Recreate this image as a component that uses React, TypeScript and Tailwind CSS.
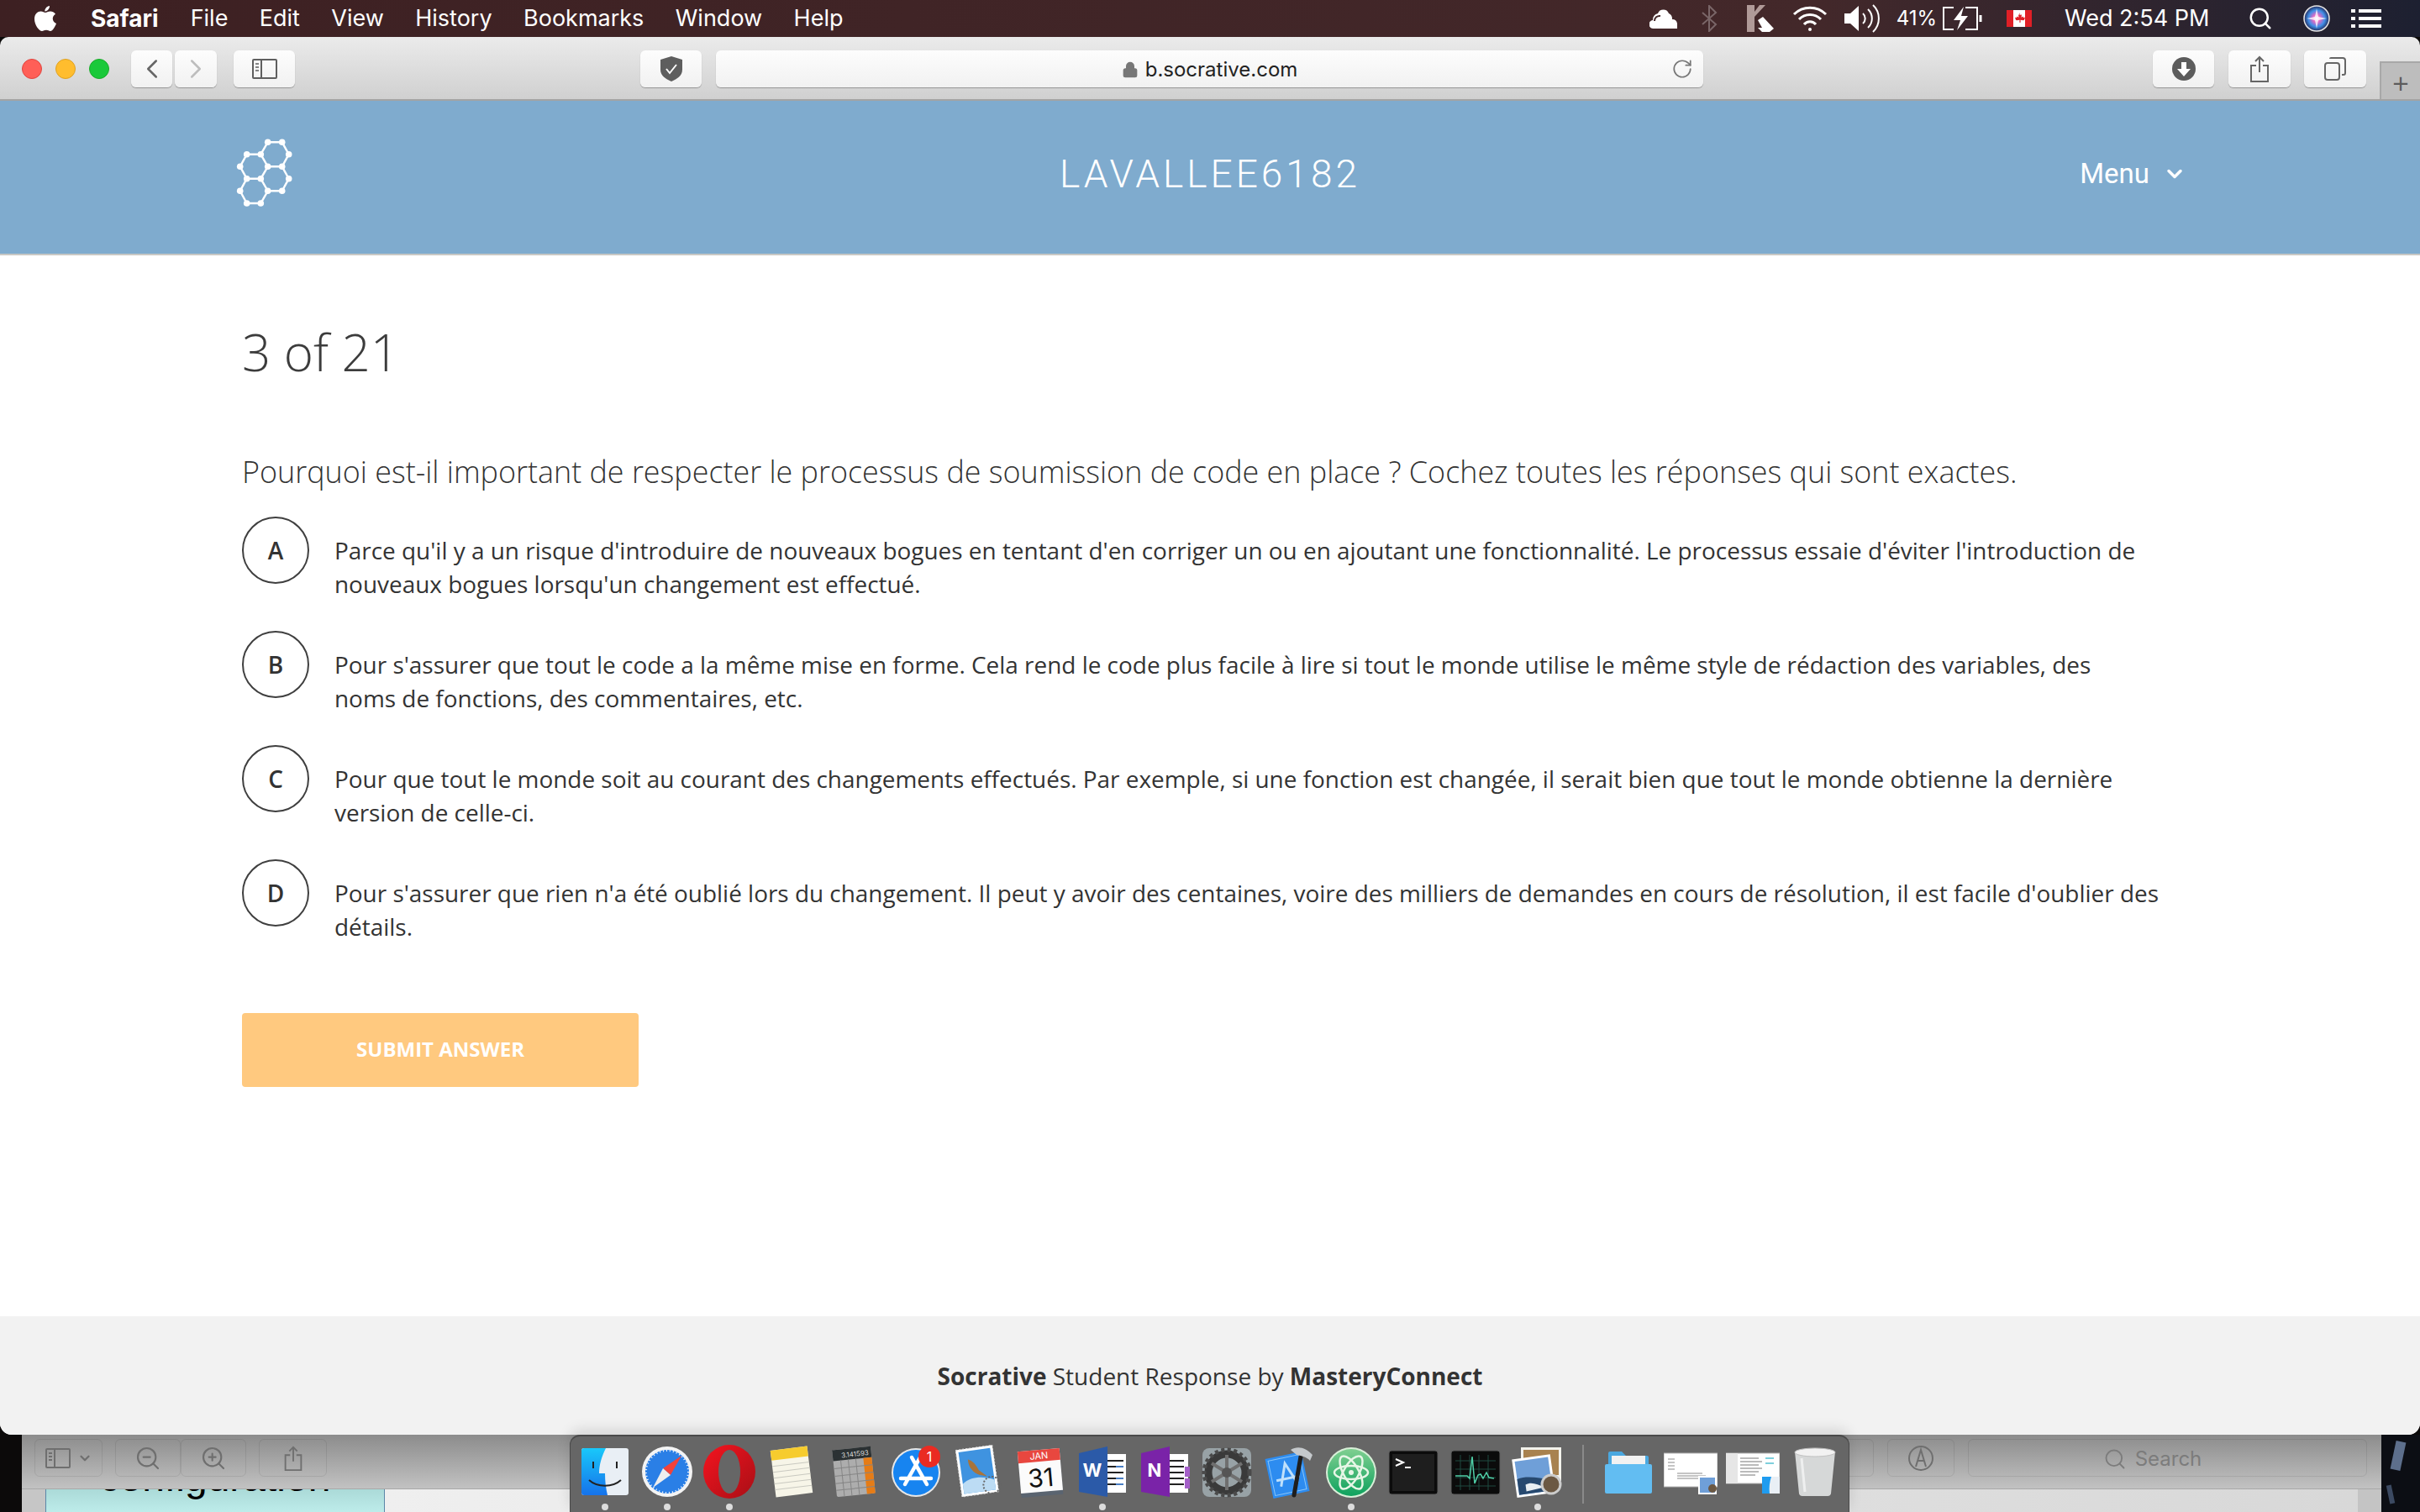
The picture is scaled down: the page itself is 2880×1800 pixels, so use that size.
import { ChevronDown, ChevronLeft, ChevronRight, RotateCw, Lock, Search, ZoomIn, ZoomOut } from "lucide-react";
import type { ReactNode } from "react";

const OPTIONS = [
  {
    letter: "A",
    lines: [
      "Parce qu'il y a un risque d'introduire de nouveaux bogues en tentant d'en corriger un ou en ajoutant une fonctionnalité. Le processus essaie d'éviter l'introduction de",
      "nouveaux bogues lorsqu'un changement est effectué.",
    ],
  },
  {
    letter: "B",
    lines: [
      "Pour s'assurer que tout le code a la même mise en forme. Cela rend le code plus facile à lire si tout le monde utilise le même style de rédaction des variables, des",
      "noms de fonctions, des commentaires, etc.",
    ],
  },
  {
    letter: "C",
    lines: [
      "Pour que tout le monde soit au courant des changements effectués. Par exemple, si une fonction est changée, il serait bien que tout le monde obtienne la dernière",
      "version de celle-ci.",
    ],
  },
  {
    letter: "D",
    lines: [
      "Pour s'assurer que rien n'a été oublié lors du changement. Il peut y avoir des centaines, voire des milliers de demandes en cours de résolution, il est facile d'oublier des",
      "détails.",
    ],
  },
];

const MENU_ITEMS = ["File", "Edit", "View", "History", "Bookmarks", "Window", "Help"];

function ToolButton({ className, children }: { className: string; children: ReactNode }) {
  return (
    <div
      className={`flex h-[44px] items-center justify-center rounded-[6px] bg-gradient-to-b from-[#fdfdfd] to-[#f1f1f1] shadow-[0_1px_1px_rgba(0,0,0,0.3)] ${className}`}
    >
      {children}
    </div>
  );
}

function MenuBar() {
  return (
    <div className="flex h-[44px] items-center bg-gradient-to-r from-[#3d2022] via-[#43282a] via-75% to-[#1d2031] font-['Inter',sans-serif] text-[27px] text-white">
      <svg viewBox="0 0 26 30" className="ml-[41px] h-[30px] w-[26px] fill-white">
        <path d="M18 0c.3 3-2.6 6.6-5.6 6.4C12 3.400 15 .3 18 0zM13 8c1.500 0 3-1.500 6-1.500 2 0 4.500 1 6 3.300-4.800 2.700-4 9.500 1 11.200-1.500 4-4.500 9-7 9-1.800 0-2.800-1.200-5-1.200s-3.300 1.200-5 1.200C5.500 30 0 22.500 0 15.500 0 9.500 4 6.500 7.500 6.500 10 6.500 11.500 8 13 8z" />
      </svg>
      <span className="ml-[41px] text-[28px] font-bold">Safari</span>
      <div className="ml-[38px] flex gap-[37.4px]">
        {MENU_ITEMS.map((item) => (
          <span key={item}>{item}</span>
        ))}
      </div>
      <div className="ml-auto flex items-center">
        <svg viewBox="0 0 38 26" className="h-[26px] w-[38px] fill-white">
          <path d="M5 25a5 5 0 0 1-1-10 8 8 0 0 1 6-8 7 7 0 0 1 13 0 7 7 0 0 1 4 7 6 6 0 0 1 6 5v6z" />
          <path d="M6 16a6 6 0 0 1 7-6" stroke="#43282a" strokeWidth="2" fill="none" />
        </svg>
        <svg viewBox="0 0 20 32" className="ml-[23px] h-[32px] w-[20px] fill-none stroke-[#7a6668] stroke-[2]">
          <path d="M2 9l16 14-8 8V1l8 8L2 23" />
        </svg>
        <svg viewBox="0 0 32 32" className="ml-[35px] h-[32px] w-[32px]">
          <path d="M0 0h9v32H0zM9 14L22 0h-7L9 8z" fill="#b09a98" />
          <path d="M13 18l6-4 13 14-5 4h-9l-5-5h5z" fill="#ffffff" />
        </svg>
        <svg viewBox="0 0 42 32" className="ml-[22px] h-[32px] w-[42px] fill-none stroke-white stroke-[3]">
          <path d="M2 11a27 27 0 0 1 38 0M8 17a18 18 0 0 1 26 0M14 23a9 9 0 0 1 14 0" />
          <circle cx="21" cy="29" r="2" fill="white" stroke="none" />
        </svg>
        <svg viewBox="0 0 42 34" className="ml-[20px] h-[34px] w-[42px] fill-none stroke-white stroke-[2]">
          <path d="M0 11h7l10-9v30l-10-9H0z" fill="white" stroke="none" />
          <path d="M22 11a8 8 0 0 1 0 12M28 6a15 15 0 0 1 0 22M34 1a22 22 0 0 1 0 32" />
        </svg>
        <span className="ml-[20px] text-[24px]">41%</span>
        <svg viewBox="0 0 48 30" className="ml-[6px] h-[30px] w-[48px] fill-none stroke-white stroke-[2]">
          <path d="M14 2H2v26h12M28 2h14v26H28" />
          <path d="M46 11v8" strokeWidth="3" />
          <path d="M26 1L14 17h8l-4 12 13-17h-8z" fill="white" stroke="none" />
        </svg>
        <svg viewBox="0 0 30 20" className="ml-[29px] h-[20px] w-[30px]">
          <rect width="30" height="20" fill="#ffffff" />
          <rect width="8" height="20" fill="#e01f26" />
          <rect x="22" width="8" height="20" fill="#e01f26" />
          <path d="M15 3l1.500 3 1.500-.7-.5 3.500 2-1.300.5 1.500 2-.3-1 3-1 .5-3.500-.4.200 3h-1.400l.2-3-3.500.4-1-.5-1-3 2 .3.500-1.500 2 1.300-.5-3.500 1.500.7z" fill="#e01f26" />
        </svg>
        <span className="ml-[39px] w-[176px] whitespace-nowrap">Wed 2:54 PM</span>
        <Search className="ml-[42px] h-[30px] w-[30px]" strokeWidth={2} />
        <svg viewBox="0 0 32 32" className="ml-[36px] h-[32px] w-[32px]">
          <defs>
            <radialGradient id="siriGlow">
              <stop offset="0" stopColor="#ffffff" />
              <stop offset="0.3" stopColor="#e06ac4" />
              <stop offset="0.65" stopColor="#3f8fe8" />
              <stop offset="1" stopColor="#232a5c" />
            </radialGradient>
          </defs>
          <circle cx="16" cy="16" r="15" fill="url(#siriGlow)" stroke="#e6e6e6" strokeWidth="1.500" />
          <path d="M16 4l2 10 10 2-10 2-2 10-2-10-10-2 10-2z" fill="#ffffff" opacity="0.75" />
        </svg>
        <svg viewBox="0 0 36 24" className="ml-[25px] mr-[46px] h-[24px] w-[36px] fill-white">
          <path d="M0 1h5v4H0zM9 1h27v4H9zM0 10h5v4H0zM9 10h27v4H9zM0 19h5v4H0zM9 19h27v4H9z" />
        </svg>
      </div>
    </div>
  );
}

function Toolbar() {
  return (
    <div className="relative flex h-[76px] items-start border-b-2 border-[#a3a3a3] bg-gradient-to-b from-[#ebebeb] to-[#d0d0d0] pt-[16px]">
      <div className="ml-[26px] mt-[10px] flex gap-[16px]">
        <span className="h-[24px] w-[24px] rounded-full border border-[#e0443e] bg-[#ff5f57]" />
        <span className="h-[24px] w-[24px] rounded-full border border-[#dea123] bg-[#ffbd2e]" />
        <span className="h-[24px] w-[24px] rounded-full border border-[#1aab29] bg-[#1ac93a]" />
      </div>
      <ToolButton className="ml-[26px] w-[49px]">
        <ChevronLeft className="h-[38px] w-[38px] text-[#666666]" strokeWidth={1.6} />
      </ToolButton>
      <ToolButton className="ml-[3px] w-[50px]">
        <ChevronRight className="h-[38px] w-[38px] text-[#bdbdbd]" strokeWidth={1.6} />
      </ToolButton>
      <ToolButton className="ml-[20px] w-[73px]">
        <svg viewBox="0 0 30 24" className="h-[24px] w-[30px] fill-none stroke-[#5f5f5f] stroke-[2]">
          <rect x="1" y="1" width="28" height="22" rx="1" />
          <path d="M11 1v22" />
          <path d="M4 6h4M4 10h4M4 14h4" strokeWidth="1.500" />
        </svg>
      </ToolButton>
      <ToolButton className="ml-[411px] w-[73px]">
        <svg viewBox="0 0 28 30" className="h-[30px] w-[28px]">
          <path d="M14 0l13 4v12c0 7-6 11-13 14C7 27 1 23 1 16V4z" fill="#5e5e5e" />
          <path d="M8 15l4 5 8-10" fill="none" stroke="#ffffff" strokeWidth="2" />
        </svg>
      </ToolButton>
      <ToolButton className="relative ml-[17px] w-[1175px]">
        <span className="flex items-center gap-[8px] pt-[2px] font-['Inter',sans-serif] text-[24px] text-[#222222]">
          <Lock className="h-[20px] w-[20px] fill-[#777777] text-[#777777]" />
          b.socrative.com
        </span>
        <RotateCw className="absolute right-[12px] h-[26px] w-[26px] text-[#777777]" strokeWidth={1.6} />
      </ToolButton>
      <ToolButton className="ml-[535px] w-[73px]">
        <svg viewBox="0 0 28 28" className="h-[28px] w-[28px]">
          <circle cx="14" cy="14" r="14" fill="#5c5c5c" />
          <path d="M11 6h6v8h5l-8 9-8-9h5z" fill="#ffffff" />
        </svg>
      </ToolButton>
      <ToolButton className="ml-[17px] w-[74px]">
        <svg viewBox="0 0 22 32" className="h-[32px] w-[22px] fill-none stroke-[#666666] stroke-[2]">
          <path d="M11 20V2M6 7l5-5 5 5M7 12H1v19h20V12h-6" />
        </svg>
      </ToolButton>
      <ToolButton className="ml-[16px] w-[74px]">
        <svg viewBox="0 0 26 28" className="h-[28px] w-[26px] fill-none stroke-[#666666] stroke-[2]">
          <rect x="1" y="7" width="17" height="20" rx="3" />
          <path d="M7 2a1 1 0 0 1 1-1h14a3 3 0 0 1 3 3v15a2 2 0 0 1-2 2h-2" />
        </svg>
      </ToolButton>
      <div className="absolute bottom-0 right-0 flex h-[45px] w-[48px] items-center justify-center border-l-2 border-t-2 border-[#a8a8a8] bg-[#bdbdbd]">
        <span className="font-['Inter',sans-serif] text-[36px] font-light leading-none text-[#5c5c5c]">+</span>
      </div>
    </div>
  );
}

function SocrativeLogo() {
  const nodes = [
    [37.7, 5.3], [54.7, 5.3], [62.7, 19.7], [54.7, 34.3], [37.7, 34.3], [29.3, 19.7],
    [12.7, 19.7], [4.7, 34.3], [12.7, 48.7], [29.3, 48.7], [62.7, 48.7], [54.7, 63.3],
    [37.7, 63.3], [29.3, 78], [12.7, 78], [4.7, 63.3],
  ];
  return (
    <svg viewBox="0 0 68 84" className="mb-[10px] ml-[281px] h-[84px] w-[68px]">
      <path
        d="M37.700 5.300H54.700L62.700 19.700L54.700 34.300H37.700L29.300 19.700ZM29.300 19.700H12.700L4.700 34.300L12.700 48.700H29.300L37.700 34.300M54.700 34.300L62.700 48.700L54.700 63.300H37.700L29.300 48.700M12.700 48.700L4.700 63.300L12.700 78H29.300L37.700 63.300"
        fill="none"
        stroke="#ffffff"
        strokeWidth="2.400"
      />
      {nodes.map(([cx, cy]) => (
        <circle key={`${cx}-${cy}`} cx={cx} cy={cy} r="3.800" fill="#ffffff" />
      ))}
    </svg>
  );
}

function Page() {
  return (
    <div className="flex flex-1 flex-col bg-white font-['Open_Sans',sans-serif]">
      <header className="grid h-[184px] grid-cols-3 items-center border-b-2 border-[#c8c8c4] bg-[#7fabce] text-white">
        <SocrativeLogo />
        <div className="mb-[8px] text-center font-['Roboto',sans-serif] text-[46px] font-light tracking-[4px]">LAVALLEE6182</div>
        <div className="mb-[8px] flex items-center justify-end gap-[16px] pr-[278px] font-['Roboto',sans-serif] text-[33px]">
          Menu
          <ChevronDown className="h-[28px] w-[28px]" strokeWidth={3} />
        </div>
      </header>
      <main className="flex-1 pl-[288px] pr-[300px] text-[#333333]">
        <h1 className="mt-[75px] text-[60px] font-light leading-[80px] text-[#3c3c3c]">3 of 21</h1>
        <p className="mt-[78px] whitespace-nowrap text-[35.9px] font-light leading-[50px]">
          Pourquoi est-il important de respecter le processus de soumission de code en place ? Cochez toutes les réponses qui sont exactes.
        </p>
        <div className="mt-[28px] flex flex-col gap-[36px]">
          {OPTIONS.map((option) => (
            <div key={option.letter} className="flex items-start gap-[30px]">
              <div className="flex h-[80px] w-[80px] shrink-0 items-center justify-center rounded-full border-2 border-[#3f3f3f] text-[28px] font-semibold">
                {option.letter}
              </div>
              <p className="whitespace-nowrap pt-[20px] text-[27.93px] leading-[40px]">
                {option.lines[0]}
                <br />
                {option.lines[1]}
              </p>
            </div>
          ))}
        </div>
        <button className="mt-[83px] flex h-[88px] w-[472px] items-center justify-center rounded-[4px] bg-[#ffc97f] pb-[2px] text-[24px] font-bold text-white">
          SUBMIT ANSWER
        </button>
      </main>
      <footer className="flex h-[141px] items-start justify-center bg-[#f2f2f2] pt-[49px] text-[28px] leading-[44px] text-[#333333]">
        <span>
          <b>Socrative</b> Student Response by <b>MasteryConnect</b>
        </span>
      </footer>
    </div>
  );
}

function GhostButton({ className, children }: { className: string; children: ReactNode }) {
  return (
    <div className={`flex h-[45px] items-center justify-center rounded-[6px] border border-[#00000014] ${className}`}>
      {children}
    </div>
  );
}

function BackWindow() {
  return (
    <div className="flex h-[92px]">
      <div className="w-[26px] bg-[#0c0a0a]" />
      <div className="flex flex-1 flex-col">
        <div className="relative z-10 flex h-[65px] items-start border-b border-[#a8a8a8] bg-gradient-to-b from-[#8c8c8c] to-[#c2c2c2] pt-[5px] text-[#6f6f6f]">
          <GhostButton className="ml-[15px] w-[81px] gap-[8px]">
            <svg viewBox="0 0 30 24" className="h-[24px] w-[30px] fill-none stroke-[#6f6f6f] stroke-[2]">
              <rect x="1" y="1" width="28" height="22" rx="1" />
              <path d="M11 1v22M4 6h4M4 10h4M4 14h4" />
            </svg>
            <ChevronDown className="h-[18px] w-[18px]" strokeWidth={3} />
          </GhostButton>
          <GhostButton className="ml-[15px] w-[78px]">
            <ZoomOut className="h-[32px] w-[32px]" strokeWidth={1.600} />
          </GhostButton>
          <GhostButton className="w-[78px]">
            <ZoomIn className="h-[32px] w-[32px]" strokeWidth={1.600} />
          </GhostButton>
          <GhostButton className="ml-[15px] w-[81px]">
            <svg viewBox="0 0 22 32" className="h-[30px] w-[22px] fill-none stroke-[#6f6f6f] stroke-[2]">
              <path d="M11 20V2M6 7l5-5 5 5M7 12H1v19h20V12h-6" />
            </svg>
          </GhostButton>
          <GhostButton className="ml-[1761px] w-[80px]">
            <span />
          </GhostButton>
          <GhostButton className="ml-[16px] w-[80px]">
            <svg viewBox="0 0 30 30" className="h-[30px] w-[30px] fill-none stroke-[#6f6f6f] stroke-[2]">
              <circle cx="15" cy="15" r="14" />
              <path d="M9 25l6-20 6 20M12 18h6" />
            </svg>
          </GhostButton>
          <GhostButton className="ml-[16px] w-[475px] gap-[10px] pr-[36px] pt-[2px] font-['Inter',sans-serif] text-[24px] text-[#7c7c7c]">
            <Search className="h-[28px] w-[28px]" strokeWidth={1.600} />
            Search
          </GhostButton>
        </div>
        <div className="flex flex-1 overflow-hidden">
          <div className="w-[28px] bg-[#c6c6c6]" />
          <div className="flex h-full w-[404px] justify-center overflow-hidden border-x border-[#5a86a8] bg-gradient-to-b from-[#abdad8] to-[#bdecea]">
            <span className="-mt-[38px] font-['Liberation_Sans',sans-serif] text-[48px] leading-[48px] text-black">configuration</span>
          </div>
          <div className="flex-1 bg-gradient-to-r from-[#efefef] to-[#d8d8d8]" />
          <div className="w-[28px] bg-[#c4c4c4]" />
        </div>
      </div>
      <div className="relative w-[46px] bg-[#0c0e14]">
        <div className="absolute left-[14px] top-[8px] h-[34px] w-[12px] rotate-12 bg-[#5d6f8c]" />
        <div className="absolute left-[8px] top-[60px] h-[22px] w-[6px] -rotate-12 bg-[#3c4a62]" />
      </div>
    </div>
  );
}

// dock icons, all on a 64x64 box
const DOCK_ICONS: { name: string; dot?: boolean; icon: ReactNode }[] = [
  {
    name: "Finder",
    dot: true,
    icon: (
      <>
        <defs>
          <linearGradient id="finderBlue" x1="0" y1="0" x2="0" y2="1">
            <stop offset="0" stopColor="#19c8fa" />
            <stop offset="1" stopColor="#1672ea" />
          </linearGradient>
        </defs>
        <rect x="4" y="4" width="56" height="56" rx="3" fill="#e9eff5" />
        <path d="M7 4h26c-5 10-8 20-8 30h7c0 9 1 18 3 26H7a3 3 0 0 1-3-3V7a3 3 0 0 1 3-3z" fill="url(#finderBlue)" />
        <path d="M18 20v8M46 20v8" stroke="#222" strokeWidth="2" />
        <path d="M13 42c10 9 28 9 38 0" fill="none" stroke="#222" strokeWidth="2" />
      </>
    ),
  },
  {
    name: "Safari",
    dot: true,
    icon: (
      <>
        <circle cx="32" cy="32" r="30" fill="#f4f4f4" />
        <circle cx="32" cy="32" r="26" fill="#2a7fe6" />
        <circle cx="32" cy="32" r="25" fill="none" stroke="#ffffff" strokeWidth="2" strokeDasharray="1 3" />
        <path d="M49 13L27 28l9 8z" fill="#f2423a" />
        <path d="M15 51l12-23 9 8z" fill="#eeeeee" />
      </>
    ),
  },
  {
    name: "Opera",
    dot: true,
    icon: (
      <>
        <defs>
          <linearGradient id="operaRed" x1="0" y1="0" x2="1" y2="1">
            <stop offset="0" stopColor="#f5141f" />
            <stop offset="1" stopColor="#a80f16" />
          </linearGradient>
        </defs>
        <ellipse cx="32" cy="32" rx="31" ry="32" fill="url(#operaRed)" />
        <ellipse cx="32" cy="32" rx="13" ry="26" fill="#666666" />
      </>
    ),
  },
  {
    name: "Notes",
    icon: (
      <g transform="rotate(-7 32 32)">
        <rect x="10" y="4" width="44" height="56" fill="#f7f5e8" />
        <rect x="10" y="4" width="44" height="12" fill="#f6cc2e" />
        <path d="M10 23h44M10 30h44M10 37h44M10 44h44M10 51h44" stroke="#c9c9c0" strokeWidth="1" />
      </g>
    ),
  },
  {
    name: "Calculator",
    icon: (
      <g transform="rotate(-6 32 32)">
        <rect x="9" y="4" width="46" height="56" rx="2" fill="#adadad" />
        <rect x="9" y="4" width="46" height="13" fill="#2b3133" />
        <rect x="45" y="17" width="10" height="43" fill="#e67c16" />
        <path d="M9 26h46M9 35h46M9 44h46M9 52h46M18 17v43M27 17v43M36 17v43" stroke="#858585" strokeWidth="1" />
        <text x="52" y="14" textAnchor="end" fontSize="8" fill="#dddddd" fontFamily="Inter, sans-serif">3.141593</text>
      </g>
    ),
  },
  {
    name: "App Store",
    icon: (
      <>
        <circle cx="32" cy="33" r="29" fill="#e8e8e8" />
        <circle cx="32" cy="33" r="27" fill="#1784f0" />
        <path d="M37 15L19 47M27 15l18 32M14 40h36" stroke="#ffffff" strokeWidth="4.500" strokeLinecap="round" />
        <circle cx="48" cy="14" r="13" fill="#ea2b22" />
        <text x="48" y="20" textAnchor="middle" fontSize="16" fill="#ffffff" fontFamily="Inter, sans-serif">1</text>
      </>
    ),
  },
  {
    name: "Mail",
    icon: (
      <g transform="rotate(-8 32 32)">
        <rect x="9" y="3" width="44" height="56" fill="#ffffff" stroke="#dddddd" strokeDasharray="2 2" />
        <rect x="12" y="6" width="38" height="50" fill="#3f93e0" />
        <path d="M12 44c10-8 26-6 38 0v12H12z" fill="#bcdcf4" />
        <path d="M22 16c6 2 9 9 11 14l9 9-9-3c-6-3-12-10-11-20z" fill="#a8743b" />
        <circle cx="46" cy="50" r="10" fill="none" stroke="#666666" strokeWidth="2" strokeDasharray="2 2" />
      </g>
    ),
  },
  {
    name: "Calendar",
    icon: (
      <g transform="rotate(-5 32 32)">
        <rect x="7" y="9" width="50" height="52" rx="1" fill="#5a6470" />
        <rect x="7" y="6" width="50" height="50" fill="#fbfbfb" />
        <rect x="7" y="6" width="50" height="14" fill="#e8473f" />
        <text x="32" y="17" textAnchor="middle" fontSize="11" fill="#ffffff" fontFamily="Inter, sans-serif">JAN</text>
        <text x="32" y="50" textAnchor="middle" fontSize="30" fill="#111111" fontFamily="Inter, sans-serif">31</text>
      </g>
    ),
  },
  {
    name: "Word",
    dot: true,
    icon: (
      <>
        <rect x="30" y="11" width="30" height="46" fill="#ffffff" />
        <path d="M36 19h21M36 26h21M36 33h21M36 40h21M36 47h21" stroke="#222222" strokeWidth="2" />
        <path d="M48 26h9M48 40h9M48 47h9" stroke="#4a7fc4" strokeWidth="2" />
        <path d="M4 10L38 2v60L4 56z" fill="#2b5aa8" />
        <text x="20" y="38" textAnchor="middle" fontSize="22" fontWeight="700" fill="#ffffff" fontFamily="Inter, sans-serif">W</text>
      </>
    ),
  },
  {
    name: "OneNote",
    icon: (
      <>
        <rect x="30" y="11" width="30" height="46" fill="#ffffff" />
        <path d="M37 19h18M37 26h18M37 33h18M37 40h18M37 47h18" stroke="#222222" strokeWidth="2" />
        <rect x="56" y="26" width="6" height="12" fill="#a45fc8" />
        <rect x="56" y="40" width="6" height="12" fill="#a45fc8" />
        <path d="M4 10L38 2v60L4 56z" fill="#7a23a8" />
        <text x="20" y="38" textAnchor="middle" fontSize="22" fontWeight="700" fill="#ffffff" fontFamily="Inter, sans-serif">N</text>
      </>
    ),
  },
  {
    name: "System Preferences",
    icon: (
      <>
        <rect x="3" y="4" width="58" height="58" rx="8" fill="#98a2a6" />
        <circle cx="32" cy="33" r="22" fill="none" stroke="#3a3a3a" strokeWidth="9" />
        <circle cx="32" cy="33" r="27" fill="none" stroke="#4a4a4a" strokeWidth="5" strokeDasharray="4 3.500" />
        <path d="M32 12v42M14 22l36 22M50 22L14 44" stroke="#6f6f6f" strokeWidth="4" />
        <circle cx="32" cy="33" r="6" fill="#555555" />
      </>
    ),
  },
  {
    name: "Xcode",
    icon: (
      <>
        <g transform="rotate(-12 30 36)">
          <rect x="8" y="12" width="44" height="48" fill="#2d8cf0" />
          <rect x="11" y="15" width="38" height="42" fill="none" stroke="#8cc6f7" strokeWidth="1" />
          <path d="M20 48l10-26 10 26M16 40h28" fill="none" stroke="#bfe0fb" strokeWidth="3" />
        </g>
        <path d="M38 60l8-46" stroke="#1e1e1e" strokeWidth="5" strokeLinecap="round" />
        <path d="M34 6c8-5 18-3 26 6l-3 7c-4-5-12-6-16-7z" fill="#c5c9cc" />
      </>
    ),
  },
  {
    name: "Atom",
    dot: true,
    icon: (
      <>
        <defs>
          <linearGradient id="atomGreen" x1="0" y1="0" x2="0" y2="1">
            <stop offset="0" stopColor="#7fcf90" />
            <stop offset="1" stopColor="#0ea25e" />
          </linearGradient>
        </defs>
        <circle cx="32" cy="33" r="30" fill="#d8efd8" />
        <circle cx="32" cy="33" r="28" fill="url(#atomGreen)" />
        <g fill="none" stroke="#e6f6e6" strokeWidth="2.500">
          <ellipse cx="32" cy="33" rx="9" ry="22" transform="rotate(30 32 33)" />
          <ellipse cx="32" cy="33" rx="9" ry="22" transform="rotate(-30 32 33)" />
          <ellipse cx="32" cy="33" rx="20" ry="8" />
        </g>
        <circle cx="32" cy="33" r="3" fill="#e6f6e6" />
      </>
    ),
  },
  {
    name: "Terminal",
    icon: (
      <>
        <rect x="3" y="7" width="58" height="52" rx="3" fill="#0b0b0b" stroke="#5c5c5c" />
        <rect x="7" y="11" width="50" height="44" fill="#1e1e1e" />
        <path d="M11 17l9 4-9 4" fill="none" stroke="#ffffff" strokeWidth="2" />
        <path d="M22 27h7" stroke="#ffffff" strokeWidth="2" />
      </>
    ),
  },
  {
    name: "Activity Monitor",
    icon: (
      <>
        <rect x="3" y="7" width="58" height="52" rx="3" fill="#0b0b0b" stroke="#5c5c5c" />
        <path d="M8 19h48M8 29h48M8 39h48M8 49h48M14 12v42M25 12v42M36 12v42M47 12v42" stroke="#1f4a40" strokeWidth="1" />
        <path d="M8 37h14l3 3 3-26 3 32 4-10 3-1 3 5 4-7 3 6 6 1" fill="none" stroke="#4fd0a8" strokeWidth="1.500" />
      </>
    ),
  },
  {
    name: "Preview",
    dot: true,
    icon: (
      <>
        <rect x="12" y="3" width="48" height="40" fill="#f2f2ec" />
        <rect x="15" y="6" width="42" height="30" fill="#a8824f" />
        <g transform="rotate(-8 28 36)">
          <rect x="4" y="14" width="46" height="46" fill="#ffffff" />
          <rect x="7" y="17" width="40" height="40" fill="#6f9fd8" />
          <path d="M7 38c14-3 26 3 40 6v13H7z" fill="#27496f" />
          <path d="M16 46c8-3 14 2 22 6l-22 2z" fill="#e9eef2" />
        </g>
        <circle cx="48" cy="47" r="11" fill="#6b5843" stroke="#cccccc" strokeWidth="3" />
      </>
    ),
  },
];

const DOCK_STACKS: { name: string; icon: ReactNode }[] = [
  {
    name: "Folder",
    icon: (
      <>
        <path d="M8 10a2 2 0 0 1 2-2h14l5 5h25a2 2 0 0 1 2 2v40H8z" fill="#4aa8e0" />
        <rect x="12" y="13" width="40" height="14" fill="#f2f2f2" />
        <path d="M6 23h52a2 2 0 0 1 2 2v31a2 2 0 0 1-2 2H6a2 2 0 0 1-2-2V25a2 2 0 0 1 2-2z" fill="#62bdf2" />
      </>
    ),
  },
  {
    name: "Documents",
    icon: (
      <>
        <rect x="0" y="10" width="64" height="40" fill="#ffffff" stroke="#b5b5b5" />
        <path d="M5 17h8M5 21h8M5 25h8M5 29h8M16 34h30M16 37h34M16 40h28" stroke="#8a8a8a" strokeWidth="1" />
        <rect x="42" y="38" width="20" height="20" fill="#6f9fd8" stroke="#ffffff" strokeWidth="2" />
        <circle cx="58" cy="52" r="5" fill="#6b5843" />
      </>
    ),
  },
  {
    name: "Downloads",
    icon: (
      <>
        <rect x="0" y="10" width="64" height="36" fill="#ffffff" stroke="#b5b5b5" />
        <rect x="0" y="10" width="14" height="36" fill="#e6e6e6" />
        <path d="M17 16h22M17 20h26M17 24h22M17 28h26M17 32h22M17 36h18" stroke="#777777" strokeWidth="1" />
        <path d="M47 16h10M47 22h10" stroke="#7fd0dd" strokeWidth="2" />
        <rect x="43" y="38" width="21" height="20" fill="#e9eff5" />
        <path d="M43 38h11c-2 6-3 13-2 20h-9z" fill="#1f9cf0" />
      </>
    ),
  },
  {
    name: "Trash",
    icon: (
      <>
        <path d="M8 8h48l-5 50a4 4 0 0 1-4 3H17a4 4 0 0 1-4-3z" fill="#d6d8d8" />
        <ellipse cx="32" cy="9" rx="24" ry="5" fill="#f2f2f2" stroke="#c2c2c2" />
        <path d="M16 16l4 40" stroke="#ffffff" strokeWidth="3" opacity="0.6" />
      </>
    ),
  },
];

function DockItem({ icon, dot }: { icon: ReactNode; dot?: boolean }) {
  return (
    <div className="relative flex h-full w-[74px] shrink-0 justify-center pt-[10px]">
      <svg viewBox="0 0 64 64" className="h-[64px] w-[64px]">
        {icon}
      </svg>
      {dot && <span className="absolute top-[80px] h-[8px] w-[8px] rounded-full bg-[#dcdcdc]" />}
    </div>
  );
}

function Dock() {
  return (
    <div className="absolute left-[678px] top-[1708px] z-20 flex h-[92px] w-[1523px] rounded-t-[12px] border-x border-t-2 border-[#4a4a4a] bg-[#666666] pl-[4px] shadow-[0_-6px_16px_rgba(0,0,0,0.12)]">
      {DOCK_ICONS.map((item) => (
        <DockItem key={item.name} icon={item.icon} dot={item.dot} />
      ))}
      <div className="mx-[16px] my-[10px] w-[2px] bg-[#8a8a8a]" />
      {DOCK_STACKS.map((item) => (
        <DockItem key={item.name} icon={item.icon} />
      ))}
    </div>
  );
}

export default function App() {
  return (
    <div className="relative flex h-[1800px] w-[2880px] flex-col overflow-hidden bg-[#0c0a0a]">
      <MenuBar />
      <div className="flex h-[1664px] flex-col overflow-hidden rounded-t-[10px] rounded-b-[14px]">
        <Toolbar />
        <Page />
      </div>
      <BackWindow />
      <Dock />
    </div>
  );
}
